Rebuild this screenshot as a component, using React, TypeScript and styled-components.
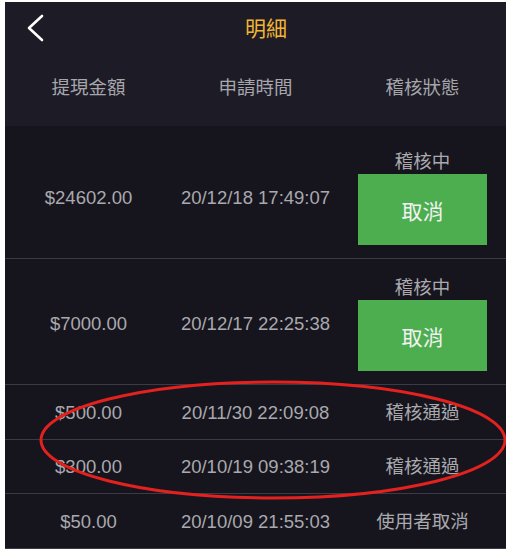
import React from "react";
import styled, { createGlobalStyle } from "styled-components";

const Global = createGlobalStyle`
  html, body { margin: 0; padding: 0; background: #ffffff; }
  #root { padding: 2px 2px 0 5px; }
  * { box-sizing: border-box; }
`;

const Page = styled.div`
  position: relative;
  width: 501px;
  background: #16151d;
  font-family: "Liberation Sans", "Noto Sans CJK TC", sans-serif;
  color: #a9a9ae;
  overflow: hidden;
`;

const Header = styled.header`
  background: #1c1b26;
`;

const Nav = styled.div`
  height: 52px;
  display: grid;
  grid-template-columns: 1fr auto 1fr;
  align-items: center;
  padding-left: 21px;
`;

const BackButton = styled.button`
  justify-self: start;
  background: none;
  border: none;
  padding: 0;
  width: 20px;
  height: 28px;
  display: flex;
  align-items: center;
  cursor: pointer;
`;

const Title = styled.h1`
  margin: 0 0 2px;
  font-size: 21px;
  font-weight: 400;
  color: #f2b533;
  line-height: 1;
  font-family: "Noto Sans CJK TC", sans-serif;
`;

const ColumnHeads = styled.div`
  height: 72px;
  padding-bottom: 4px;
  display: grid;
  grid-template-columns: repeat(3, 1fr);
  align-items: center;
  text-align: center;
  font-size: 18.5px;
  color: #a6a6ab;
`;

const Row = styled.div<{ $padTop?: number; $padBottom?: number; $height?: number }>`
  display: grid;
  grid-template-columns: repeat(3, 1fr);
  align-items: center;
  text-align: center;
  font-size: 18.5px;
  ${(p) => (p.$height ? `height: ${p.$height}px;` : "")}
  padding: ${(p) => p.$padTop ?? 0}px 0 ${(p) => p.$padBottom ?? 0}px;
  border-bottom: 1.5px solid #3b3a45;
`;

const Cell = styled.div`
  line-height: 24px;
  white-space: nowrap;
`;

const StatusCell = styled.div`
  display: flex;
  flex-direction: column;
  align-items: center;
`;

const StatusText = styled.div`
  line-height: 24px;
`;

const CancelButton = styled.button`
  width: 129px;
  height: 71px;
  border: none;
  background: #4cae4f;
  color: #f2f2f2;
  font-size: 21px;
  font-family: "Noto Sans CJK TC", sans-serif;
  padding: 0;
  cursor: pointer;
`;

const Annotation = styled.svg`
  position: absolute;
  left: 30px;
  top: 376px;
  pointer-events: none;
`;

type Rec = { amount: string; time: string; status: string; pending?: boolean };

const records: Rec[] = [
  { amount: "$24602.00", time: "20/12/18 17:49:07", status: "稽核中", pending: true },
  { amount: "$7000.00", time: "20/12/17 22:25:38", status: "稽核中", pending: true },
  { amount: "$500.00", time: "20/11/30 22:09:08", status: "稽核通過" },
  { amount: "$300.00", time: "20/10/19 09:38:19", status: "稽核通過" },
  { amount: "$50.00", time: "20/10/09 21:55:03", status: "使用者取消" },
];

export default function App() {
  return (
    <>
      <Global />
      <Page>
        <Header>
          <Nav>
            <BackButton aria-label="back">
              <svg width="20" height="28" viewBox="0 0 20 28">
                <polyline
                  points="16,2 3,14 16,26"
                  fill="none"
                  stroke="#ffffff"
                  strokeWidth="2.6"
                  strokeLinecap="round"
                  strokeLinejoin="round"
                />
              </svg>
            </BackButton>
            <Title>明細</Title>
            <span />
          </Nav>
          <ColumnHeads>
            <Cell>提現金額</Cell>
            <Cell>申請時間</Cell>
            <Cell>稽核狀態</Cell>
          </ColumnHeads>
        </Header>
        {records.map((r, i) =>
          r.pending ? (
            <Row key={i} $padTop={i === 0 ? 24 : 17} $padBottom={i === 0 ? 13 : 13}>
              <Cell>{r.amount}</Cell>
              <Cell>{r.time}</Cell>
              <StatusCell>
                <StatusText>{r.status}</StatusText>
                <CancelButton>取消</CancelButton>
              </StatusCell>
            </Row>
          ) : (
            <Row key={i} $height={54.5} $padTop={2}>
              <Cell>{r.amount}</Cell>
              <Cell>{r.time}</Cell>
              <Cell>{r.status}</Cell>
            </Row>
          )
        )}
        <Annotation width="476" height="126" viewBox="0 0 476 126">
          <ellipse cx="238" cy="62" rx="232" ry="58" fill="none" stroke="#e3211f" strokeWidth="3" />
        </Annotation>
      </Page>
    </>
  );
}
